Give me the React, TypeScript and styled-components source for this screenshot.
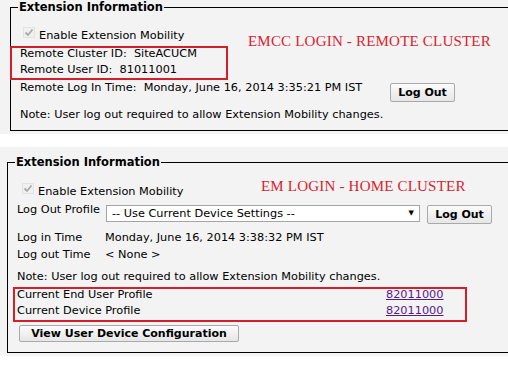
import styled, { createGlobalStyle } from "styled-components";

const GlobalStyle = createGlobalStyle`
  html, body {
    margin: 0;
    padding: 0;
    background: #fff;
  }
  body {
    width: 508px;
    height: 382px;
    overflow: hidden;
    font-family: "DejaVu Sans", Verdana, sans-serif;
    font-size: 11.3px;
    color: #000;
  }
`;

const Section = styled.div<{ $inset: number; $top: number }>`
  position: relative;
  background: #f3f3f3;
  padding: ${(p) => p.$top}px 0 3px ${(p) => p.$inset}px;
  & + & {
    margin-top: 13px;
  }
`;

const Box = styled.fieldset<{ $bottom: number }>`
  margin: 0;
  min-width: 0;
  border: 1px solid #000;
  border-right: none;
  padding: 0 0 ${(p) => p.$bottom}px 9px;
`;

const Title = styled.legend`
  font-weight: bold;
  font-size: 11.5px;
  line-height: 14px;
  padding: 0 1px;
  margin-left: -2px;
`;

const Note = styled.div`
  position: absolute;
  font-family: "Liberation Serif", "Times New Roman", serif;
  font-size: 15px;
  line-height: 17px;
  letter-spacing: 0.2px;
  color: #d9232e;
  white-space: nowrap;
`;

const CheckRow = styled.div<{ $top: number; $indent: number }>`
  display: flex;
  align-items: flex-start;
  gap: 4px;
  height: 17px;
  line-height: 17px;
  margin: ${(p) => p.$top}px 0 0 ${(p) => p.$indent}px;
`;

const Tick = styled.span`
  display: inline-flex;
  width: 12px;
  height: 11px;
  box-sizing: border-box;
  border: 1px solid #e2e2e2;
  background: #f0f0f0;
  svg {
    display: block;
  }
`;

const Marked = styled.div<{ $shift: number; $width: number; $pad: number }>`
  box-sizing: border-box;
  width: ${(p) => p.$width}px;
  margin: 2px 0 0 ${(p) => p.$shift}px;
  padding: 0 0 ${(p) => p.$pad}px ${(p) => -p.$shift - 2}px;
  border: 2px solid #d21f2b;
`;

const MarkedRows = styled.div`
  margin-top: -2px;
`;

const Line = styled.div<{ $h?: number }>`
  line-height: ${(p) => p.$h ?? 16}px;
  white-space: nowrap;
`;

const Pair = styled.div<{ $label: number; $h?: number }>`
  display: grid;
  grid-template-columns: ${(p) => p.$label}px auto;
  line-height: ${(p) => p.$h ?? 16}px;
  white-space: nowrap;
`;

const LogRow = styled.div`
  display: grid;
  grid-template-columns: 370px auto;
  align-items: start;
  line-height: 16px;
  height: 22px;
  white-space: nowrap;
`;

const ProfileRow = styled.div`
  display: grid;
  grid-template-columns: 89px 314px auto;
  align-items: start;
  height: 21px;
  margin-top: 3px;
  line-height: 14px;
  white-space: nowrap;
`;

const Spaced = styled.div<{ $top: number }>`
  margin-top: ${(p) => p.$top}px;
`;

const Button = styled.button<{ $top: number; $left?: number; $w: number; $h: number }>`
  display: block;
  box-sizing: border-box;
  width: ${(p) => p.$w}px;
  height: ${(p) => p.$h}px;
  margin: ${(p) => p.$top}px 0 0 ${(p) => p.$left ?? 0}px;
  padding: 0;
  border: 1px solid #a9a9a9;
  border-radius: 2px;
  background: linear-gradient(#fbfbfb, #e6e6e6);
  font-family: "DejaVu Sans", Verdana, sans-serif;
  font-weight: bold;
  font-size: 11px;
  color: #000;
  line-height: ${(p) => p.$h - 2}px;
  text-align: center;
`;

const SelectBox = styled.div`
  box-sizing: border-box;
  display: flex;
  justify-content: space-between;
  align-items: center;
  height: 17px;
  margin-top: 2px;
  padding: 0 5px 0 5px;
  border: 1px solid #a5a5a5;
  background: #fff;
  line-height: 15px;
`;

const Arrow = styled.span`
  font-size: 7px;
  line-height: 7px;
`;

const Link = styled.a`
  color: #551a8b;
  text-decoration: underline;
`;

function Check() {
  return (
    <Tick>
      <svg width="10" height="9" viewBox="0 0 10 9">
        <path d="M1.5 4.5 L4 7 L8.5 1.5" fill="none" stroke="#a9a9a9" strokeWidth="1.8" />
      </svg>
    </Tick>
  );
}

export default function App() {
  return (
    <>
      <GlobalStyle />
      <Section $inset={10} $top={0}>
        <Box $bottom={7}>
          <Title>Extension Information</Title>
          <CheckRow $top={13} $indent={3}>
            <Check />
            <span>Enable Extension Mobility</span>
          </CheckRow>
          <Marked $shift={-10} $width={218} $pad={0}>
            <MarkedRows>
              <Line>Remote Cluster ID:&nbsp; SiteACUCM</Line>
              <Line>Remote User ID:&nbsp; 81011001</Line>
            </MarkedRows>
          </Marked>
          <LogRow>
            <span>Remote Log In Time:&nbsp; Monday, June 16, 2014 3:35:21 PM IST</span>
            <Button $top={3} $w={65} $h={19}>Log Out</Button>
          </LogRow>
          <Spaced $top={5}>
            <Line>Note: User log out required to allow Extension Mobility changes.</Line>
          </Spaced>
        </Box>
        <Note style={{ left: 248, top: 33 }}>EMCC LOGIN - REMOTE CLUSTER</Note>
      </Section>

      <Section $inset={7} $top={8}>
        <Box $bottom={10}>
          <Title>Extension Information</Title>
          <CheckRow $top={14} $indent={5}>
            <Check />
            <span>Enable Extension Mobility</span>
          </CheckRow>
          <ProfileRow>
            <span>Log Out Profile</span>
            <SelectBox>
              <span>-- Use Current Device Settings --</span>
              <Arrow>▼</Arrow>
            </SelectBox>
            <Button $top={2} $left={7} $w={65} $h={19}>Log Out</Button>
          </ProfileRow>
          <Spaced $top={5}>
            <Pair $label={88} $h={17}>
              <span>Log in Time</span>
              <span>Monday, June 16, 2014 3:38:32 PM IST</span>
            </Pair>
            <Pair $label={88} $h={17}>
              <span>Log out Time</span>
              <span>&lt; None &gt;</span>
            </Pair>
          </Spaced>
          <Spaced $top={5}>
            <Line $h={17}>Note: User log out required to allow Extension Mobility changes.</Line>
          </Spaced>
          <Marked $shift={-4} $width={454} $pad={1}>
            <MarkedRows>
              <Pair $label={369}>
                <span>Current End User Profile</span>
                <Link href="#">82011000</Link>
              </Pair>
              <Pair $label={369}>
                <span>Current Device Profile</span>
                <Link href="#">82011000</Link>
              </Pair>
            </MarkedRows>
          </Marked>
          <Button $top={3} $left={2} $w={220} $h={17}>View User Device Configuration</Button>
        </Box>
        <Note style={{ left: 261, top: 31 }}>EM LOGIN - HOME CLUSTER</Note>
      </Section>
    </>
  );
}
